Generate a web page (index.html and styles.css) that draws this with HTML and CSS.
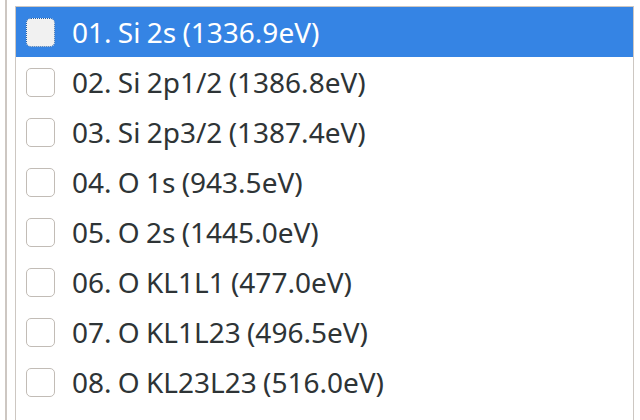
FILE: index.html
```html
<!DOCTYPE html>
<html>
<head>
<meta charset="utf-8">
<link rel="stylesheet" href="styles.css">
</head>
<body>
<div class="page">
  <div class="splitter"></div>
  <div class="listbox">
    <div class="row selected"><span class="check"></span><span class="label">01. Si 2s (1336.9eV)</span></div>
    <div class="row"><span class="check"></span><span class="label">02. Si 2p1/2 (1386.8eV)</span></div>
    <div class="row"><span class="check"></span><span class="label">03. Si 2p3/2 (1387.4eV)</span></div>
    <div class="row"><span class="check"></span><span class="label">04. O 1s (943.5eV)</span></div>
    <div class="row"><span class="check"></span><span class="label">05. O 2s (1445.0eV)</span></div>
    <div class="row"><span class="check"></span><span class="label">06. O KL1L1 (477.0eV)</span></div>
    <div class="row"><span class="check"></span><span class="label">07. O KL1L23 (496.5eV)</span></div>
    <div class="row"><span class="check"></span><span class="label">08. O KL23L23 (516.0eV)</span></div>
  </div>
</div>
</body>
</html>
```

FILE: styles.css
```css
html, body {
  margin: 0;
  padding: 0;
  background: #ffffff;
  overflow: hidden;
}
.page {
  display: flex;
  height: 420px;
  width: 640px;
}
.splitter {
  width: 2px;
  margin-left: 5px;
  background: #cdc7c2;
  flex: none;
}
.listbox {
  margin-left: 8px;
  margin-top: 6px;
  width: 619px;
  border: 1px solid #cdc7c2;
  border-bottom: none;
  background: #ffffff;
  flex: none;
  height: 420px;
  box-sizing: border-box;
}
.row {
  height: 50px;
  display: flex;
  align-items: center;
  padding-left: 10px;
  font-family: "Noto Sans", sans-serif;
  font-size: 28px;
  word-spacing: -1px;
  color: #2e3436;
}
.row.selected {
  background: #3584e4;
  color: #ffffff;
}
.check {
  width: 29px;
  height: 29px;
  box-sizing: border-box;
  border: 1.5px solid #c2bcb6;
  border-radius: 5px;
  background: #ffffff;
  flex: none;
  margin-right: 17px;
}
.row.selected .check {
  background: #f1f1f1;
  border: 1.5px dotted #1f5faa;
}
.label {
  white-space: nowrap;
}
```
